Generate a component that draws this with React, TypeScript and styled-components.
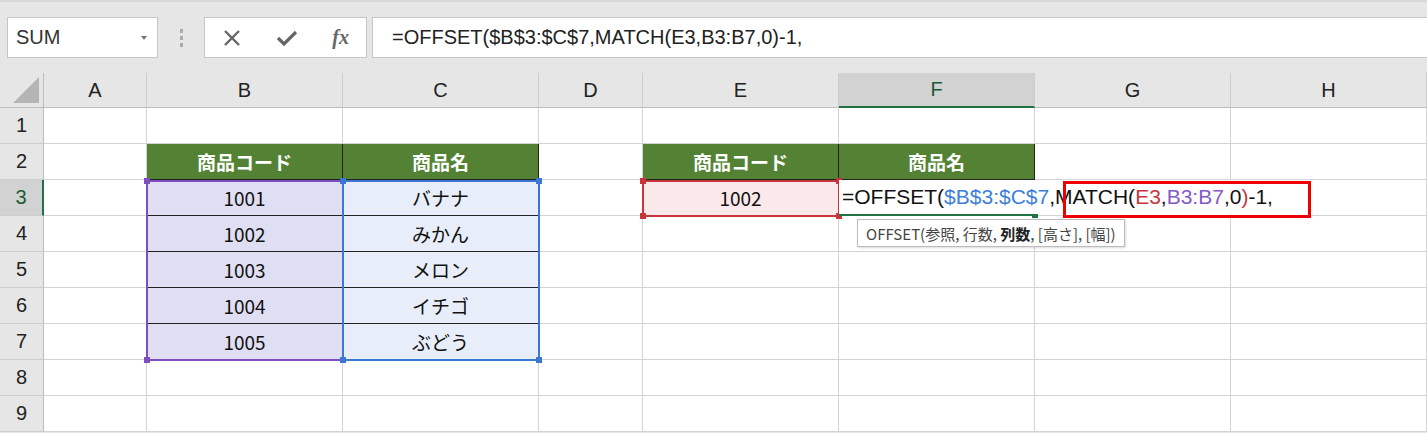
import styled, { createGlobalStyle } from 'styled-components';

const GlobalStyle = createGlobalStyle`
    body { margin: 0; background: #fff; font-family: "Noto Sans CJK JP", "Liberation Sans", sans-serif; }
`;

const COLS = [
    { name: '', w: 44 },
    { name: 'A', w: 103 },
    { name: 'B', w: 196 },
    { name: 'C', w: 196 },
    { name: 'D', w: 104 },
    { name: 'E', w: 196 },
    { name: 'F', w: 196 },
    { name: 'G', w: 196 },
    { name: 'H', w: 196 },
];

type CellStyle = 'header' | 'b' | 'c' | 'e' | 'plain';

const data: Record<string, { text: string; kind: CellStyle }> = {
    'B2': { text: '商品コード', kind: 'header' },
    'C2': { text: '商品名', kind: 'header' },
    'E2': { text: '商品コード', kind: 'header' },
    'F2': { text: '商品名', kind: 'header' },
    'E3': { text: '1002', kind: 'e' },
    'B3': { text: '1001', kind: 'b' }, 'C3': { text: 'バナナ', kind: 'c' },
    'B4': { text: '1002', kind: 'b' }, 'C4': { text: 'みかん', kind: 'c' },
    'B5': { text: '1003', kind: 'b' }, 'C5': { text: 'メロン', kind: 'c' },
    'B6': { text: '1004', kind: 'b' }, 'C6': { text: 'イチゴ', kind: 'c' },
    'B7': { text: '1005', kind: 'b' }, 'C7': { text: 'ぶどう', kind: 'c' },
};

const bg: Record<CellStyle, string> = {
    header: '#548235', b: '#dfdef2', c: '#e8eef9', e: '#fbe8ea', plain: '#fff',
};

const Page = styled.div`
    width: 1427px;
    height: 433px;
    background: #e6e6e6;
    overflow: hidden;
`;

const Toolbar = styled.div`
    height: 73px;
    display: flex;
    align-items: center;
    padding: 0 0 0 7px;
    gap: 5px;
    border-top: 2px solid #d8d8d8;
    box-sizing: border-box;
`;

const NameBox = styled.div`
    width: 151px;
    height: 41px;
    background: #fff;
    border: 1px solid #c6c6c6;
    box-sizing: border-box;
    display: flex;
    align-items: center;
    justify-content: space-between;
    padding: 0 10px 0 8px;
    font-family: "Liberation Sans", sans-serif;
    font-size: 20px;
    color: #333;
`;

const Caret = styled.span`
    border-left: 3px solid transparent;
    border-right: 3px solid transparent;
    border-top: 4px solid #777;
`;

const Grip = styled.div`
    width: 36px;
    display: flex;
    flex-direction: column;
    align-items: center;
    gap: 3px;
    span { width: 3px; height: 4px; background: #aaa; }
`;

const Buttons = styled.div`
    width: 163px;
    height: 41px;
    background: #fff;
    border: 1px solid #c6c6c6;
    box-sizing: border-box;
    display: flex;
    align-items: center;
    justify-content: space-around;
    color: #666;
`;

const Fx = styled.span`
    font-family: "Liberation Serif", serif;
    font-style: italic;
    font-weight: bold;
    font-size: 20px;
    color: #666;
`;

const FormulaInput = styled.div`
    flex: 1;
    height: 41px;
    background: #fff;
    border: 1px solid #c6c6c6;
    border-right: none;
    box-sizing: border-box;
    display: flex;
    align-items: center;
    padding-left: 19px;
    font-family: "Liberation Sans", sans-serif;
    font-size: 20px;
    color: #222;
`;

const SheetWrap = styled.div`
    position: relative;
`;

const Grid = styled.div`
    display: grid;
    grid-template-columns: ${COLS.map((c) => c.w + 'px').join(' ')};
    grid-template-rows: 35px repeat(9, 36px);
`;

const ColHead = styled.div<{ $sel?: boolean }>`
    background: ${({ $sel }) => ($sel ? '#d2d2d2' : '#e6e6e6')};
    border-right: 1px solid #cdcdcd;
    border-bottom: ${({ $sel }) => ($sel ? '2px solid #217346' : '1px solid #bdbdbd')};
    box-sizing: border-box;
    display: flex;
    align-items: center;
    justify-content: center;
    font-family: "Liberation Sans", sans-serif;
    font-size: 20px;
    color: ${({ $sel }) => ($sel ? '#185c37' : '#222')};
`;

const Corner = styled.div`
    background: #e6e6e6;
    border-right: 1px solid #bdbdbd;
    border-bottom: 1px solid #bdbdbd;
    position: relative;
    &::after {
        content: '';
        position: absolute;
        right: 4px;
        bottom: 4px;
        border-left: 26px solid transparent;
        border-bottom: 26px solid #b5b5b5;
    }
`;

const RowHead = styled.div<{ $sel?: boolean }>`
    background: ${({ $sel }) => ($sel ? '#d2d2d2' : '#e6e6e6')};
    border-right: ${({ $sel }) => ($sel ? '2px solid #217346' : '1px solid #bdbdbd')};
    border-bottom: 1px solid #cdcdcd;
    box-sizing: border-box;
    display: flex;
    align-items: center;
    justify-content: center;
    font-family: "Liberation Sans", sans-serif;
    font-size: 20px;
    color: ${({ $sel }) => ($sel ? '#185c37' : '#222')};
`;

const Cell = styled.div<{ $kind: CellStyle }>`
    background: ${({ $kind }) => bg[$kind]};
    border-right: 1px solid ${({ $kind }) => ($kind === 'header' ? '#222' : '#d4d4d4')};
    border-bottom: 1px solid ${({ $kind }) => ($kind === 'header' || $kind === 'b' || $kind === 'c' ? '#222' : '#d4d4d4')};
    box-sizing: border-box;
    display: flex;
    align-items: center;
    justify-content: center;
    font-size: 19px;
    font-weight: ${({ $kind }) => ($kind === 'header' ? 'bold' : 'normal')};
    color: ${({ $kind }) => ($kind === 'header' ? '#fff' : '#111')};
`;

const RangeBox = styled.div<{ $color: string; $x: number; $y: number; $w: number; $h: number }>`
    position: absolute;
    left: ${({ $x }) => $x}px;
    top: ${({ $y }) => $y}px;
    width: ${({ $w }) => $w}px;
    height: ${({ $h }) => $h}px;
    border: 2px solid ${({ $color }) => $color};
    box-sizing: border-box;
    pointer-events: none;
    i {
        position: absolute;
        width: 6px;
        height: 6px;
        background: ${({ $color }) => $color};
    }
    i:nth-child(1) { left: -4px; top: -4px; }
    i:nth-child(2) { right: -4px; top: -4px; }
    i:nth-child(3) { left: -4px; bottom: -4px; }
    i:nth-child(4) { right: -4px; bottom: -4px; }
`;

const EditCell = styled.div`
    position: absolute;
    left: 839px;
    top: 107px;
    width: 196px;
    height: 36px;
    background: #fff;
    border-bottom: 2px solid #217346;
    box-sizing: border-box;
    &::after {
        content: '';
        position: absolute;
        right: -3px;
        bottom: -4px;
        width: 6px;
        height: 6px;
        background: #217346;
    }
`;

const EditText = styled.div`
    position: absolute;
    left: 842px;
    top: 107px;
    height: 34px;
    display: flex;
    align-items: center;
    background: #fff;
    font-family: "Liberation Sans", sans-serif;
    font-size: 21px;
    color: #111;
    white-space: nowrap;
`;

const Part = styled.span<{ $c?: string }>`
    color: ${({ $c }) => $c || '#111'};
`;

const RedBox = styled.div`
    position: absolute;
    left: 1063px;
    top: 108px;
    width: 248px;
    height: 37px;
    border: 3px solid #ee0000;
    box-sizing: border-box;
`;

const Tooltip = styled.div`
    position: absolute;
    left: 857px;
    top: 146px;
    height: 26px;
    padding: 0 8px;
    background: #fff;
    border: 1px solid #bcbcbc;
    box-shadow: 1px 1px 2px rgba(0, 0, 0, 0.15);
    display: flex;
    align-items: center;
    font-size: 15px;
    color: #444;
    white-space: nowrap;
    b { color: #222; }
`;

const colLetter = (i: number) => COLS[i].name;

const App = () => {
    const cells = [];
    cells.push(<Corner key="corner" />);
    for (let c = 1; c < COLS.length; c++) {
        cells.push(<ColHead key={'h' + c} $sel={colLetter(c) === 'F'}>{colLetter(c)}</ColHead>);
    }
    for (let r = 1; r <= 9; r++) {
        cells.push(<RowHead key={'r' + r} $sel={r === 3}>{r}</RowHead>);
        for (let c = 1; c < COLS.length; c++) {
            const d = data[colLetter(c) + r];
            cells.push(
                <Cell key={colLetter(c) + r} $kind={d ? d.kind : 'plain'}>
                    {d ? d.text : ''}
                </Cell>
            );
        }
    }

    return (
        <Page>
            <GlobalStyle />
            <Toolbar>
                <NameBox>SUM<Caret /></NameBox>
                <Grip><span /><span /><span /></Grip>
                <Buttons>
                    <svg width="20" height="20" viewBox="0 0 20 20">
                        <path d="M3 3 L17 17 M17 3 L3 17" stroke="#666" strokeWidth="2.4" />
                    </svg>
                    <svg width="22" height="20" viewBox="0 0 22 20">
                        <path d="M2 10 L8 16 L20 4" stroke="#666" strokeWidth="3.2" fill="none" />
                    </svg>
                    <Fx>fx</Fx>
                </Buttons>
                <FormulaInput>=OFFSET($B$3:$C$7,MATCH(E3,B3:B7,0)-1,</FormulaInput>
            </Toolbar>
            <SheetWrap>
                <Grid>{cells}</Grid>
                <RangeBox $color="#7f4fc0" $x={146} $y={107} $w={198} $h={181}>
                    <i /><i /><i /><i />
                </RangeBox>
                <RangeBox $color="#3a78d4" $x={342} $y={107} $w={198} $h={181}>
                    <i /><i /><i /><i />
                </RangeBox>
                <RangeBox $color="#c8363c" $x={642} $y={107} $w={198} $h={37}>
                    <i /><i /><i /><i />
                </RangeBox>
                <EditCell />
                <EditText>
                    <Part>=OFFSET(</Part>
                    <Part $c="#3d7fd8">$B$3:$C$7</Part>
                    <Part>,MATCH(</Part>
                    <Part $c="#c8363c">E3</Part>
                    <Part>,</Part>
                    <Part $c="#8559c7">B3:B7</Part>
                    <Part>,0</Part>
                    <Part $c="#c8363c">)</Part>
                    <Part>-1,</Part>
                </EditText>
                <RedBox />
                <Tooltip>
                    OFFSET(参照, 行数,&nbsp;<b>列数</b>, [高さ], [幅])
                </Tooltip>
            </SheetWrap>
        </Page>
    );
};

export default App;
